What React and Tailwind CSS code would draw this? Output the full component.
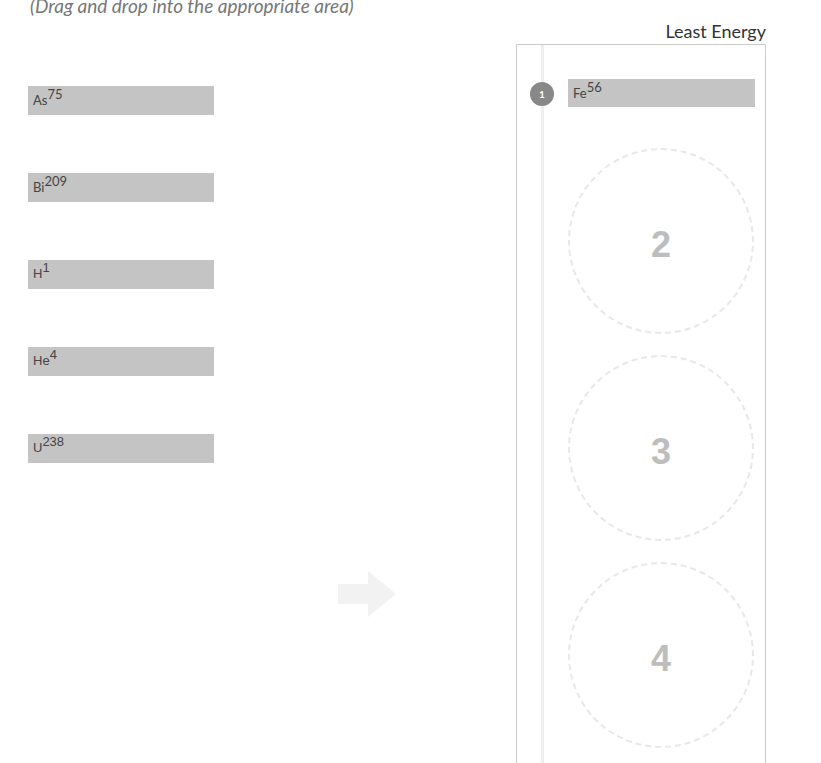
const choices = [
  { sym: "As", mass: "75", font: "lato" },
  { sym: "Bi", mass: "209", font: "lato" },
  { sym: "H", mass: "1", font: "arial" },
  { sym: "He", mass: "4", font: "arial" },
  { sym: "U", mass: "238", font: "arial" },
]

const Chip = ({ sym, mass, font, className = "" }) => (
  <div
    className={`h-[29px] bg-[#c4c4c4] pl-[5px] pt-[3px] leading-[20px] text-[#444] ${
      font === "arial" ? "font-['Liberation_Sans',Arial,sans-serif]" : "font-['Lato',sans-serif]"
    } ${className}`}
  >
    <span className="text-[13px]">{sym}</span>
    <sup className="text-[13px]">{mass}</sup>
  </div>
)

const DropSlot = ({ n }) => (
  <div className="flex h-[186px] w-[186px] items-center justify-center rounded-full border-2 border-dashed border-[#e8e8e8] pt-[8px]">
    <span className="font-['Liberation_Sans',Arial,sans-serif] text-[36px] font-bold text-[#bdbdbd]">{n}</span>
  </div>
)

const App = () => {
  return (
    <div className="h-[763px] w-[821px] overflow-hidden bg-white font-['Lato',sans-serif]">
      <p className="-mt-[6px] pl-[30px] text-[19px] italic leading-6 text-[#777]">
        (Drag and drop into the appropriate area)
      </p>

      <div className="flex">
        {/* choices */}
        <div className="flex w-[214px] flex-col gap-[58px] pl-[28px] pt-[68px]">
          {choices.map((c) => (
            <Chip key={c.sym} {...c} />
          ))}
        </div>

        {/* arrow */}
        <div className="flex w-[302px] justify-center pl-[3px] pt-[553px]">
          <svg width="58" height="46" viewBox="0 0 58 46">
            <polygon points="0,13 30,13 30,0 58,23 30,46 30,33 0,33" fill="#f2f2f2" />
          </svg>
        </div>

        {/* ordering column */}
        <div className="w-[250px]">
          <div className="pt-[3px] pb-[2px] text-right text-[18px] leading-[21px] text-[#333]">Least Energy</div>
          <div className="flex h-[740px] border border-[#ccc]">
            <div className="relative w-[51px]">
              <div className="absolute inset-y-0 left-[24px] w-[3px] bg-[#eee]" />
              <div className="relative ml-[13px] mt-[37px] flex h-6 w-6 items-center justify-center rounded-full bg-[#888] text-[10px] font-bold text-white">
                1
              </div>
            </div>
            <div className="flex flex-col pt-[34px]">
              <Chip sym="Fe" mass="56" font="lato" className="!h-[28px] w-[187px]" />
              <div className="mt-[41px] flex flex-col gap-[21px]">
                <DropSlot n="2" />
                <DropSlot n="3" />
                <DropSlot n="4" />
              </div>
            </div>
          </div>
        </div>
      </div>
    </div>
  )
}

export default App
